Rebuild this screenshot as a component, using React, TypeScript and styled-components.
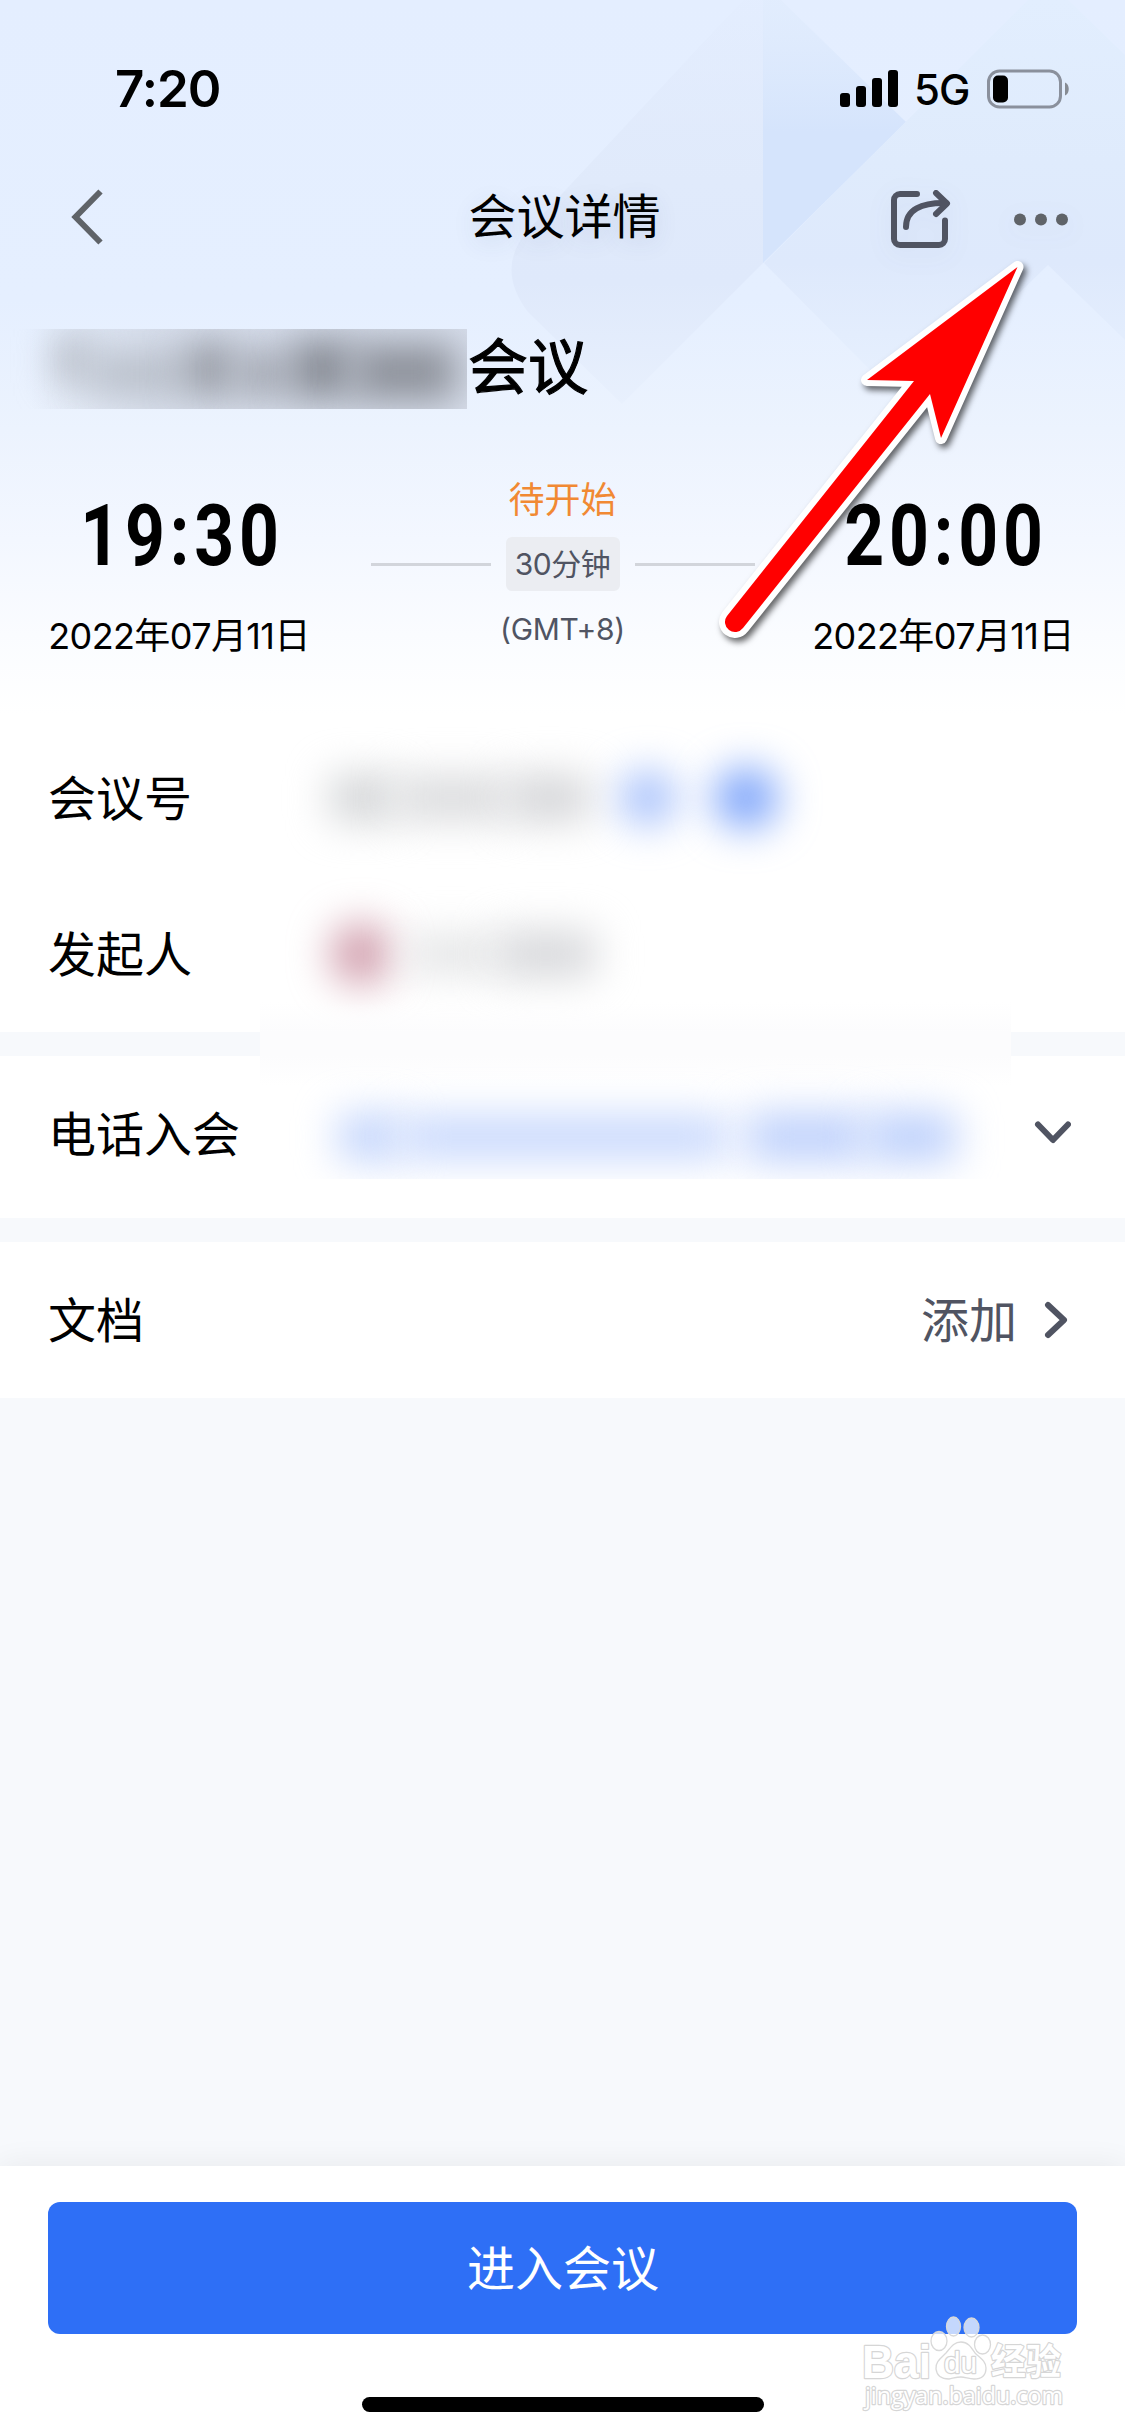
import React from 'react';
import styled, { createGlobalStyle } from 'styled-components';

const ink = '#000';
const slate = '#505462';
const canvas = '#f7f9fc';
const cjk = "'Noto Sans CJK SC', sans-serif";

const GlobalStyle = createGlobalStyle`
  * { box-sizing: border-box; }
  body { margin: 0; background: ${canvas}; font-family: Inter, ${cjk}; color: ${ink}; }
`;

const Page = styled.div`
  position: relative;
  width: 1125px;
  height: 2436px;
  display: flex;
  flex-direction: column;
  overflow: hidden;
  background: ${canvas};
`;

const Hero = styled.header`
  position: relative;
  height: 720px;
  display: flex;
  flex-direction: column;
  background: linear-gradient(#e4eeff 0, #e5efff 300px, #ecf3fe 430px, #f3f7ff 540px, #fafcff 635px, #fff 715px);
`;

const Facets = styled.svg`
  position: absolute;
  inset: 0;
`;

const StatusBar = styled.div`
  position: relative;
  height: 132px;
  padding: 53px 55px 0 115px;
  display: flex;
  justify-content: space-between;
`;

const Clock = styled.div`
  font-size: 51px;
  font-weight: 600;
  line-height: 72px;
  letter-spacing: -1px;
`;

const StatusIcons = styled.div`
  display: flex;
  height: 71px;
  align-items: center;
`;

const Bars = styled.div`
  display: flex;
  align-items: flex-end;
  gap: 6px;
  height: 37px;
`;

const Bar = styled.i<{ $h: number }>`
  width: 10px;
  height: ${(p) => p.$h}px;
  border-radius: 3px;
  background: ${ink};
`;

const Network = styled.div`
  width: 73px;
  margin-left: 16px;
  font-size: 42px;
  font-weight: 450;
  line-height: 70px;
  letter-spacing: -1px;
  padding-top: 3px;
`;

const NavBar = styled.nav`
  position: relative;
  height: 168px;
  display: grid;
  grid-template-columns: 1fr auto 1fr;
  align-items: center;
  padding: 0 48px 0 66px;
`;

const NavTitle = styled.h1`
  margin: -6px 14px 0 0;
  font: 400 48px/72px ${cjk};
  text-shadow: 0 6px 24px rgba(60, 70, 110, 0.14);
`;

const NavActions = styled.div`
  display: flex;
  justify-content: flex-end;
  align-items: center;
  gap: 61px;
  padding-top: 5px;
  filter: drop-shadow(0 6px 12px rgba(60, 70, 110, 0.08));
`;

const TitleRow = styled.div`
  position: relative;
  display: flex;
  height: 138px;
  padding: 29px 0 0 10px;
`;

const HiddenTitle = styled.div`
  position: relative;
  width: 457px;
  height: 80px;
  overflow: hidden;
  display: flex;
  align-items: center;
  padding-left: 46px;
  background: linear-gradient(90deg, rgba(205, 211, 224, 0) 20px, rgba(205, 211, 224, 0.6) 140px);
`;

const TitleSmudge = styled.i<{ $w: number; $c: string; $h?: number; $y?: number }>`
  flex: none;
  width: ${(p) => p.$w}px;
  height: ${(p) => p.$h ?? 46}px;
  margin-top: ${(p) => p.$y ?? 0}px;
  background: ${(p) => p.$c};
  filter: blur(19px);
`;

const MeetingName = styled.h2`
  margin: -4px 0 0 1px;
  font: 400 60px/76px ${cjk};
  -webkit-text-stroke: 1.2px ${ink};
`;

const Schedule = styled.section`
  position: relative;
  display: flex;
  justify-content: space-between;
  height: 282px;
  padding: 38px 50px 0 47px;
`;

const Moment = styled.div`
  width: 264px;
  display: flex;
  flex-direction: column;
  align-items: center;
`;

const BigTime = styled.div`
  font: 700 86px/100px Roboto, sans-serif;
  height: 133px;
  padding: 10px 0 0 8px;
  white-space: nowrap;
  letter-spacing: 6px;
  transform: scaleX(0.81);
`;

const DateText = styled.div`
  font-size: 36px;
  line-height: 54px;
  letter-spacing: -0.6px;
  white-space: nowrap;
`;

const Between = styled.div`
  width: 384px;
  margin-left: 3px;
  display: flex;
  flex-direction: column;
  align-items: center;
`;

const State = styled.div`
  height: 61px;
  font: 400 36px/54px ${cjk};
  margin-top: -6px;
  margin-bottom: 6px;
  color: #f18933;
`;

const DurationRow = styled.div`
  width: 100%;
  display: flex;
  align-items: center;
  gap: 15px;
`;

const Rule = styled.i`
  flex: 1;
  height: 3px;
  background: #d2d5db;
`;

const Duration = styled.div`
  width: 114px;
  height: 54px;
  border-radius: 6px;
  background: #ebedf2;
  color: ${slate};
  font-size: 30px;
  line-height: 54px;
  letter-spacing: -0.5px;
  text-align: center;
`;

const Zone = styled.div`
  padding-top: 18px;
  font-size: 30px;
  line-height: 40px;
  letter-spacing: -0.3px;
  color: ${slate};
`;

const Section = styled.section<{ $h: number }>`
  height: ${(p) => p.$h}px;
  background: #fff;
  display: flex;
  flex-direction: column;
`;

const Row = styled.div<{ $h: number }>`
  height: ${(p) => p.$h}px;
  display: flex;
  align-items: center;
  padding: 0 54px 0 48px;
`;

const Label = styled.div`
  width: 212px;
  margin-top: -6px;
  font: 400 48px/72px ${cjk};
`;

const Redacted = styled.div<{ $h: number; $shift?: number; $clip?: boolean }>`
  width: 751px;
  height: ${(p) => p.$h}px;
  align-self: flex-start;
  display: flex;
  align-items: center;
  padding-top: ${(p) => p.$shift ?? 0}px;
  overflow: ${(p) => (p.$clip ? 'hidden' : 'visible')};
`;

const Smudge = styled.i<{ $w: number; $h: number; $c: string; $gap?: number; $round?: boolean }>`
  flex: none;
  width: ${(p) => p.$w}px;
  height: ${(p) => p.$h}px;
  margin-left: ${(p) => p.$gap ?? 0}px;
  border-radius: ${(p) => (p.$round ? '50%' : '8px')};
  background: ${(p) => p.$c};
  filter: blur(20px);
`;

const Band = styled.div`
  height: 24px;
  display: flex;
  background: ${canvas};
`;

const BandVeil = styled.i`
  position: relative;
  width: 751px;
  height: 84px;
  margin: -30px 0 0 260px;
  background: linear-gradient(rgba(252, 252, 253, 0), #fcfcfd 36%, #fcfcfd 64%, rgba(252, 252, 253, 0));
`;

const AddText = styled.div`
  margin: -6px 27px 0 auto;
  font: 400 48px/72px ${cjk};
  color: ${slate};
`;

const DownChevron = styled.svg`
  margin-left: auto;
`;

const Footer = styled.footer`
  margin-top: auto;
  height: 270px;
  padding: 36px 48px 24px;
  display: flex;
  flex-direction: column;
  align-items: center;
  justify-content: space-between;
  background: #fff;
  box-shadow: 0 0 30px rgba(0, 0, 0, 0.07);
`;

const JoinButton = styled.button`
  width: 100%;
  height: 132px;
  padding: 0 0 6px 1px;
  border: 0;
  border-radius: 12px;
  background: #2e6ff6;
  color: #fff;
  font: 400 48px/72px ${cjk};
`;

const HomeIndicator = styled.i`
  width: 402px;
  height: 15px;
  border-radius: 8px;
  background: ${ink};
`;

const Pointer = styled.svg`
  position: absolute;
  left: 700px;
  top: 240px;
`;

const PointerEdge = styled.path`
  filter: drop-shadow(3px 4px 3px rgba(0, 0, 0, 0.6));
`;

const Watermark = styled.svg`
  position: absolute;
  left: 855px;
  top: 2310px;
`;

function Battery() {
  return (
    <svg width="83" height="40" viewBox="0 0 83 40">
      <rect x="1.5" y="2" width="72" height="36" rx="11" fill="none" stroke="#8a909c" strokeWidth="3" />
      <rect x="6" y="6.5" width="15" height="27" rx="5" fill="#000" />
      <path d="M78 13.5c5 2 5 11 0 13z" fill="#868b93" />
    </svg>
  );
}

function ShareIcon() {
  return (
    <svg width="64" height="66" viewBox="0 0 64 66" fill="none" stroke={slate} strokeWidth="6" strokeLinecap="round" strokeLinejoin="round">
      <path d="M29 8H12a6 6 0 0 0-6 6v39a6 6 0 0 0 6 6h39a6 6 0 0 0 6-6V34.500" />
      <path d="M18 41C18 24 33 16.500 58 17" />
      <path d="M48 7l11 10.500L48 28" />
    </svg>
  );
}

const arrow = 'M1017.500 267L867 380L914 381L727 616A9.800 9.800 0 0 0 743 628L930 394L941 438Z';

export default function App() {
  return (
    <>
      <GlobalStyle />
      <Page>
        <Hero>
          <Facets width="1125" height="440" viewBox="0 0 1125 440">
            <defs>
              <linearGradient id="facetLeft" x1="0" y1="0" x2="0" y2="1">
                <stop offset="0" stopColor="#dfe8fa" stopOpacity="0.1" />
                <stop offset="0.45" stopColor="#e0eafb" />
                <stop offset="0.7" stopColor="#dfe9fb" />
                <stop offset="1" stopColor="#e8f0fd" />
              </linearGradient>
              <linearGradient id="facetMid" x1="0" y1="0" x2="0" y2="1">
                <stop offset="0" stopColor="#dfebfc" stopOpacity="0.5" />
                <stop offset="0.5" stopColor="#d5e4fc" />
                <stop offset="1" stopColor="#d5e4fc" />
              </linearGradient>
              <linearGradient id="facetRight" x1="0" y1="0" x2="0" y2="1">
                <stop offset="0" stopColor="#e2eefe" />
                <stop offset="0.4" stopColor="#dfebfc" />
                <stop offset="0.65" stopColor="#dee9fc" />
                <stop offset="1" stopColor="#e8f1fe" />
              </linearGradient>
            </defs>
            <path d="M743 0L530 228Q494 267 528 312L622 404L764 262V0Z" fill="url(#facetLeft)" />
            <path d="M763 0H781L906 122L763 263Z" fill="url(#facetMid)" />
            <path d="M1028 0H1068L1125 55V340L1048 265L905 405L764 263Z" fill="url(#facetRight)" />
          </Facets>
          <StatusBar>
            <Clock>7:20</Clock>
            <StatusIcons>
              <Bars>
                <Bar $h={14} />
                <Bar $h={21} />
                <Bar $h={29} />
                <Bar $h={37} />
              </Bars>
              <Network>5G</Network>
              <Battery />
            </StatusIcons>
          </StatusBar>
          <NavBar>
            <svg width="44" height="64" viewBox="0 0 44 64" fill="none" stroke="#5f6368" strokeWidth="6">
              <path d="M34.500 7.500L9.500 33L34.500 58.500" />
            </svg>
            <NavTitle>会议详情</NavTitle>
            <NavActions>
              <ShareIcon />
              <svg width="64" height="20" viewBox="0 0 64 20" fill="#5f6368">
                <circle cx="7" cy="10.500" r="6" />
                <circle cx="28" cy="10.500" r="6" />
                <circle cx="49" cy="10.500" r="6" />
              </svg>
            </NavActions>
          </NavBar>
          <TitleRow>
            <HiddenTitle>
              <TitleSmudge $w={34} $h={46} $y={-18} $c="#b2b7c0" />
              <TitleSmudge $w={95} $h={36} $y={10} $c="#b4bac4" />
              <TitleSmudge $w={50} $h={50} $c="#9397a0" />
              <TitleSmudge $w={56} $h={42} $y={10} $c="#a0a4ae" />
              <TitleSmudge $w={62} $h={58} $c="#858992" />
              <TitleSmudge $w={104} $h={56} $y={6} $c="#8b8f98" />
            </HiddenTitle>
            <MeetingName>会议</MeetingName>
          </TitleRow>
          <Schedule>
            <Moment>
              <BigTime>19:30</BigTime>
              <DateText>2022年07月11日</DateText>
            </Moment>
            <Between>
              <State>待开始</State>
              <DurationRow>
                <Rule />
                <Duration>30分钟</Duration>
                <Rule />
              </DurationRow>
              <Zone>(GMT+8)</Zone>
            </Between>
            <Moment>
              <BigTime>20:00</BigTime>
              <DateText>2022年07月11日</DateText>
            </Moment>
          </Schedule>
        </Hero>

        <Section $h={312}>
          <Row $h={156}>
            <Label>会议号</Label>
            <Redacted $h={156}>
              <Smudge $gap={70} $w={66} $h={46} $c="#d2d4d6" />
              <Smudge $w={112} $h={44} $c="#d9dadc" />
              <Smudge $w={82} $h={46} $c="#d3d4d7" />
              <Smudge $gap={30} $w={56} $h={54} $c="#a0bcfb" $round />
              <Smudge $gap={38} $w={64} $h={60} $c="#77a0fa" $round />
            </Redacted>
          </Row>
          <Row $h={156}>
            <Label>发起人</Label>
            <Redacted $h={156}>
              <Smudge $gap={70} $w={62} $h={62} $c="#d09cab" $round />
              <Smudge $gap={14} $w={90} $h={38} $c="#e3e4e5" />
              <Smudge $w={100} $h={46} $c="#d6d7da" />
            </Redacted>
          </Row>
        </Section>
        <Band>
          <BandVeil />
        </Band>
        <Section $h={162}>
          <Row $h={156}>
            <Label>电话入会</Label>
            <Redacted $h={123} $shift={38} $clip>
              <Smudge $gap={78} $w={64} $h={46} $c="#c2d4fc" />
              <Smudge $w={326} $h={42} $c="#c6d7fd" />
              <Smudge $gap={18} $w={120} $h={48} $c="#bdd0fc" />
              <Smudge $w={90} $h={48} $c="#bbcffc" />
            </Redacted>
            <DownChevron width="42" height="30" viewBox="0 0 42 30" fill="none" stroke={slate} strokeWidth="6" strokeLinecap="round" strokeLinejoin="round">
              <path d="M9 5.500L24 21L39 5.500" />
            </DownChevron>
          </Row>
        </Section>
        <Band />
        <Section $h={156}>
          <Row $h={156}>
            <Label>文档</Label>
            <AddText>添加</AddText>
            <svg width="27" height="42" viewBox="0 0 27 42" fill="none" stroke={slate} strokeWidth="6" strokeLinecap="round" strokeLinejoin="round">
              <path d="M4 6L20 21L4 36" />
            </svg>
          </Row>
        </Section>

        <Footer>
          <JoinButton>进入会议</JoinButton>
          <HomeIndicator />
        </Footer>

        <Pointer width="350" height="420" viewBox="700 240 350 420">
          <PointerEdge d={arrow} fill="#fff" stroke="#fff" strokeWidth="12" strokeLinejoin="round" />
          <path d={arrow} fill="#f00" />
        </Pointer>

        <Watermark width="225" height="115" viewBox="855 2310 225 115">
          <g fill="#fff" fillOpacity="0.72" stroke="#d9d9d9" strokeWidth="1.300">
            <ellipse cx="939" cy="2341" rx="8" ry="9.500" />
            <ellipse cx="953.500" cy="2326.500" rx="7" ry="9.500" />
            <ellipse cx="971.500" cy="2327.500" rx="7.500" ry="9.500" />
            <ellipse cx="982.500" cy="2344.500" rx="8" ry="9.500" />
            <path d="M961 2342c-7 0-10 5-15 11-5 5-11 9-10 16 1 8 7 10 13 10 5-1 8-2 12-2s8 2 13 2c7 0 12-3 12-11 0-7-6-10-11-15-4-6-7-11-14-11z" />
          </g>
          <g fill="#fff" stroke="#d6d6d6" strokeWidth="2.400" paintOrder="stroke" strokeLinejoin="round">
            <text x="862" y="2378" fontFamily="Liberation Sans, Arial, sans-serif" fontWeight="700" fontSize="46" textLength="69" lengthAdjust="spacingAndGlyphs">Bai</text>
            <text x="944" y="2373" fontFamily="Liberation Sans, Arial, sans-serif" fontSize="29" textLength="33" lengthAdjust="spacingAndGlyphs">du</text>
            <text x="991" y="2375" fontFamily="Noto Sans CJK SC, sans-serif" fontWeight="700" fontSize="36" textLength="70" lengthAdjust="spacingAndGlyphs">经验</text>
            <text x="865" y="2404" fontFamily="Open Sans, sans-serif" fontSize="23" textLength="198" lengthAdjust="spacingAndGlyphs">jingyan.baidu.com</text>
          </g>
        </Watermark>
      </Page>
    </>
  );
}
